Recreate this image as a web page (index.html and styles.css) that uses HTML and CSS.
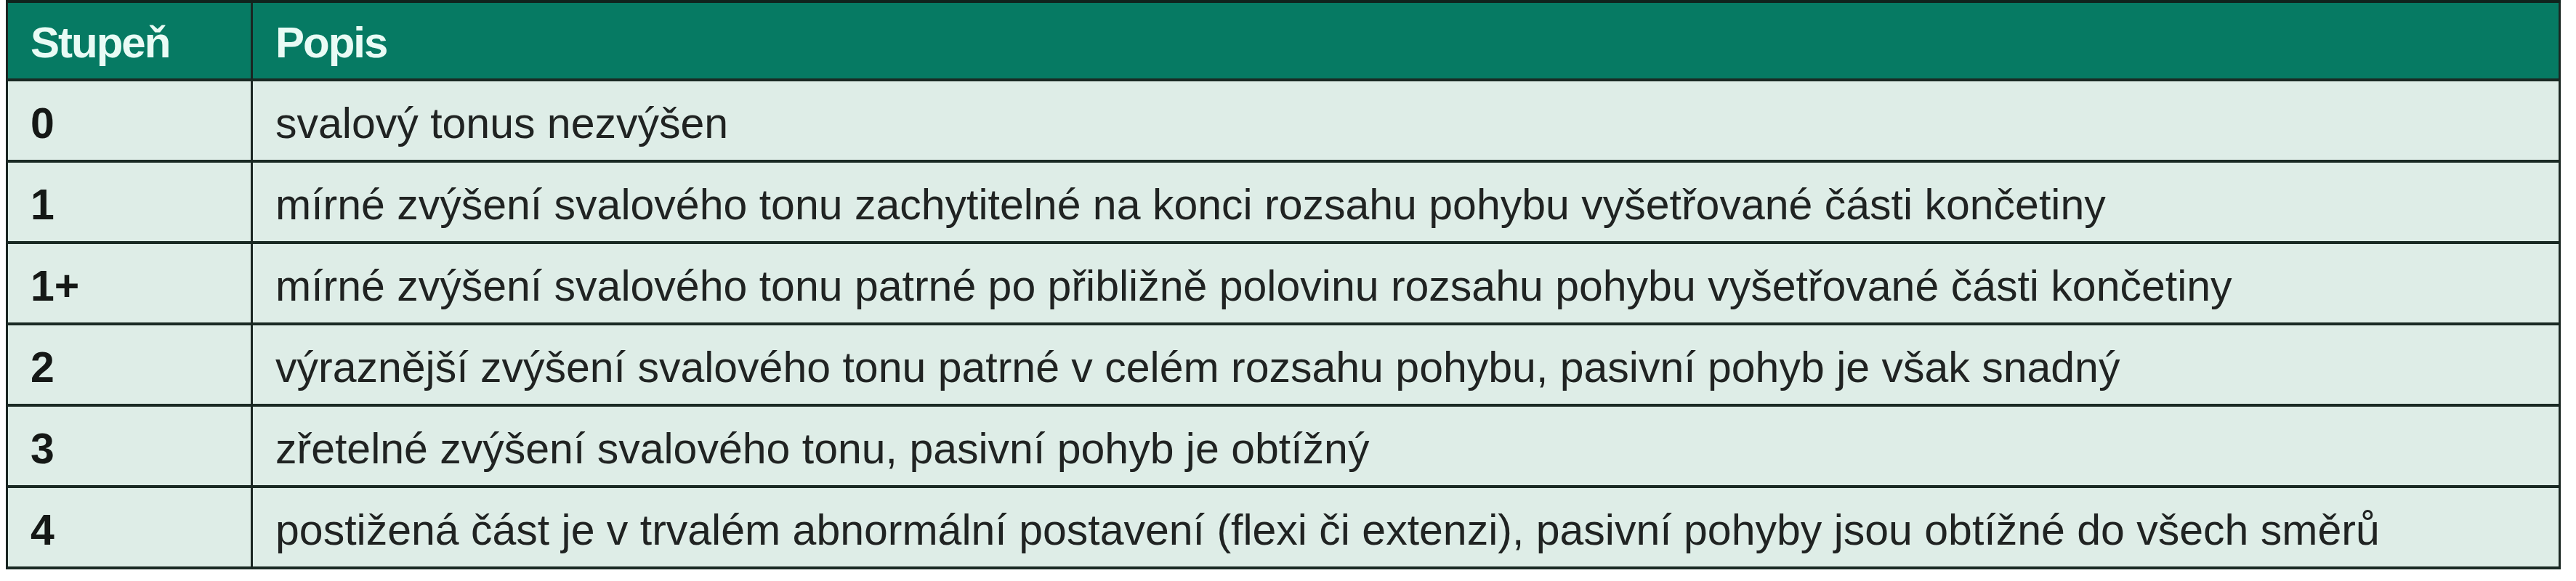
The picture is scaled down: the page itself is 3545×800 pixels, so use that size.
FILE: index.html
```html
<!DOCTYPE html>
<html lang="cs">
<head>
<meta charset="utf-8">
<title>Stupnice</title>
<link rel="stylesheet" href="styles.css">
</head>
<body>
<div class="table">
  <div class="cell head">Stupeň</div>
  <div class="cell head">Popis</div>

  <div class="cell grade">0</div>
  <div class="cell desc">svalový tonus nezvýšen</div>

  <div class="cell grade">1</div>
  <div class="cell desc">mírné zvýšení svalového tonu zachytitelné na konci rozsahu pohybu vyšetřované části končetiny</div>

  <div class="cell grade">1+</div>
  <div class="cell desc">mírné zvýšení svalového tonu patrné po přibližně polovinu rozsahu pohybu vyšetřované části končetiny</div>

  <div class="cell grade">2</div>
  <div class="cell desc">výraznější zvýšení svalového tonu patrné v celém rozsahu pohybu, pasivní pohyb je však snadný</div>

  <div class="cell grade">3</div>
  <div class="cell desc">zřetelné zvýšení svalového tonu, pasivní pohyb je obtížný</div>

  <div class="cell grade">4</div>
  <div class="cell desc">postižená část je v trvalém abnormální postavení (flexi či extenzi), pasivní pohyby jsou obtížné do všech směrů</div>
</div>
</body>
</html>
```

FILE: styles.css
```css
* {
  box-sizing: border-box;
}

html, body {
  margin: 0;
  padding: 0;
  background: #ffffff;
}

body {
  font-family: "Liberation Sans", Arial, sans-serif;
  color: #1d1f1e;
}

.table {
  display: grid;
  grid-template-columns: 337px 3176px;
  grid-template-rows: 108px repeat(6, 112px);
  width: 3516px;
  margin-left: 8px;
  border-top: 4px solid #10231d;
  border-left: 3px solid #1a2622;
  background: #deede7;
}

.cell {
  border-right: 3px solid #1a2622;
  border-bottom: 4px solid #1a2a24;
  padding-left: 31px;
  white-space: nowrap;
}

.head {
  background: #067a63;
  color: #e9fbf5;
  font-weight: bold;
  font-size: 60px;
  line-height: 60px;
  letter-spacing: -2px;
  padding-top: 25px;
}

.grade,
.desc {
  font-size: 59px;
  line-height: 59px;
  padding-top: 29px;
}

.grade {
  font-weight: bold;
  color: #151816;
}

.desc {
  color: #202322;
}
```
